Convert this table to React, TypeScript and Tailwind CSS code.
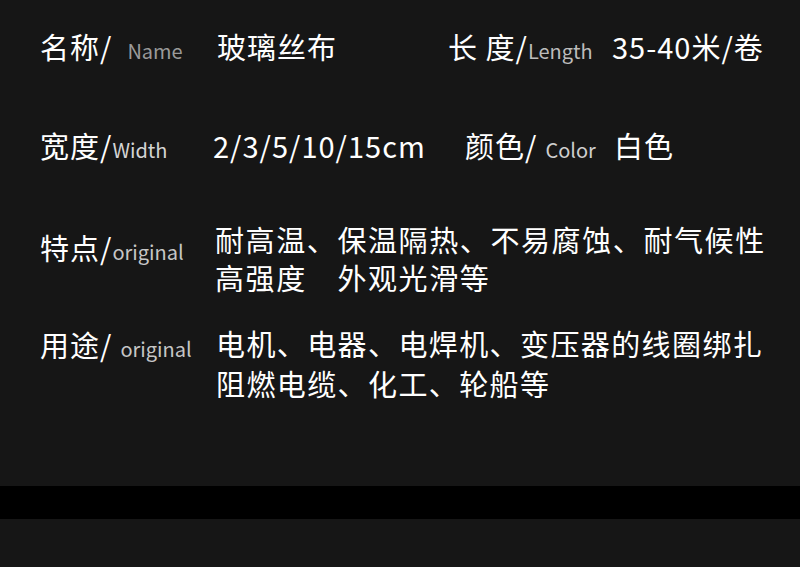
export default function App() {
  return (
    <div className="w-[800px] h-[567px] bg-[#161616] flex flex-col text-white font-['Noto_Sans_CJK_SC','Noto_Sans',sans-serif]">
      <div className="h-[486px] flex flex-col text-[29px] leading-[38px] tracking-[1px]">
        {/* 名称 / 长度 */}
        <div className="mt-[27px] flex items-start whitespace-nowrap">
          <div className="w-[217px] pl-[40px]">
            名称/<span className="ml-[15px] text-[20px] tracking-normal text-[#9a9a9a]">Name</span>
          </div>
          <div className="w-[231px]">玻璃丝布</div>
          <div className="w-[164px]">
            长 度/<span className="text-[20px] tracking-normal text-[#bcbcbc]">Length</span>
          </div>
          <div>35-40米/卷</div>
        </div>

        {/* 宽度 / 颜色 */}
        <div className="mt-[56px] flex items-start whitespace-nowrap">
          <div className="w-[213px] pl-[40px]">
            宽度/<span className="text-[20px] tracking-normal text-[#d4d4d4]">Width</span>
          </div>
          <div className="w-[252px]">2/3/5/10/15cm</div>
          <div className="w-[149px]">
            颜色/<span className="ml-[8px] text-[20px] tracking-normal text-[#cfcfcf]">Color</span>
          </div>
          <div>白色</div>
        </div>

        {/* 特点 */}
        <div className="mt-[51px] flex items-start">
          <div className="w-[215px] pl-[40px] mt-[8px] whitespace-nowrap">
            特点/<span className="text-[20px] tracking-normal text-[#c6c6c6]">original</span>
          </div>
          <div className="tracking-[1.6px]">
            <p>耐高温、保温隔热、不易腐蚀、耐气候性</p>
            <p>高强度　外观光滑等</p>
          </div>
        </div>

        {/* 用途 */}
        <div className="mt-[27px] flex items-start leading-[40px]">
          <div className="w-[216px] pl-[40px] mt-[1px] whitespace-nowrap">
            用途/<span className="ml-[8px] text-[20px] tracking-normal text-[#c6c6c6]">original</span>
          </div>
          <div className="tracking-[1.4px]">
            <p>电机、电器、电焊机、变压器的线圈绑扎</p>
            <p>阻燃电缆、化工、轮船等</p>
          </div>
        </div>
      </div>
      <div className="h-[33px] bg-black" />
      <div className="flex-1" />
    </div>
  );
}
